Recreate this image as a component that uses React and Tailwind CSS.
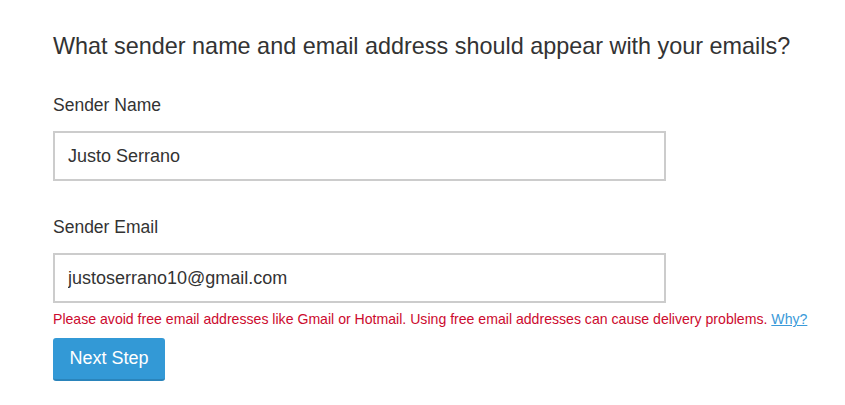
import React from 'react';

export default function App() {
  return (
    <div className="w-[845px] h-[405px] bg-white pl-[53px] pt-[31px] font-['Liberation_Sans',Arial,sans-serif] text-[#333]">
      <h1 className="text-[23.4px] leading-[30px] text-[#333]">
        What sender name and email address should appear with your emails?
      </h1>

      <div className="mt-[34px]">
        <label className="block text-[17.5px] leading-[20px]">Sender Name</label>
        <input
          type="text"
          defaultValue="Justo Serrano"
          className="mt-[16px] block w-[613px] h-[50px] border-2 border-[#ccc] px-[13px] text-[18px] text-[#333] outline-none"
        />
      </div>

      <div className="mt-[36px]">
        <label className="block text-[17.5px] leading-[20px]">Sender Email</label>
        <input
          type="text"
          defaultValue="justoserrano10@gmail.com"
          className="mt-[16px] block w-[613px] h-[50px] border-2 border-[#ccc] px-[13px] text-[18px] text-[#333] outline-none"
        />
        <p className="mt-[7px] text-[14.1px] leading-[18px] text-[#cc0a2e]">
          Please avoid free email addresses like Gmail or Hotmail. Using free email addresses can cause delivery problems.{' '}
          <a href="#" className="text-[#3a9ad9] underline">Why?</a>
        </p>
      </div>

      <button className="mt-[10px] w-[112px] h-[43px] rounded-[3px] bg-[#3399d6] border-b-2 border-[#2a84bb] text-white text-[18px]">
        Next Step
      </button>
    </div>
  );
}
